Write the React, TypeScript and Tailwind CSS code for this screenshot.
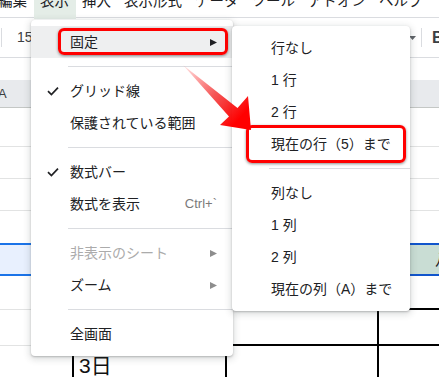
import React from 'react';

const menuBar = ['編集', '表示', '挿入', '表示形式', 'データ', 'ツール', 'アドオン', 'ヘルプ'];

function Arrow({ gray }: { gray?: boolean }) {
    return (
        <svg width="7" height="7" viewBox="0 0 7 7" className="shrink-0">
            <polygon points="0,0 7,3.5 0,7" fill={gray ? '#8d8d8d' : '#202124'} />
        </svg>
    );
}

function Check() {
    return (
        <svg width="12" height="10" viewBox="0 0 12 10" className="absolute left-[16px]">
            <path d="M1 5.2 L4.4 8.6 L11 1.6" fill="none" stroke="#202124" strokeWidth="1.7" />
        </svg>
    );
}

function Item({
    label,
    checked,
    sub,
    disabled,
    hint,
    active,
}: {
    label: string;
    checked?: boolean;
    sub?: boolean;
    disabled?: boolean;
    hint?: string;
    active?: boolean;
}) {
    return (
        <div
            className={`relative flex h-[32px] items-center justify-between pl-[39px] pr-[16px] text-[14px] ${
                disabled ? 'text-[#ababab]' : 'text-[#202124]'
            } ${active ? 'bg-[#eeeff0]' : ''}`}
        >
            {checked && <Check />}
            <span className="whitespace-nowrap">{label}</span>
            {sub && <Arrow gray={disabled || !active} />}
            {hint && <span className="text-[13px] text-[#7a7a7a]">{hint}</span>}
        </div>
    );
}

function Sep() {
    return (
        <div className="flex h-[17px] items-center pl-[37px]">
            <div className="h-px w-full bg-[#dadce0]" />
        </div>
    );
}

function RedBox({ className }: { className: string }) {
    return (
        <div
            className={`pointer-events-none absolute rounded-[6px] border-[3px] border-[#ff0000] shadow-[0_1px_3px_rgba(0,0,0,0.45)] ${className}`}
        />
    );
}

export default function App() {
    return (
        <div className="relative h-[377px] w-[439px] overflow-hidden bg-white font-['Liberation_Sans','Noto_Sans_CJK_JP',sans-serif] text-[#202124]">
            {/* menu bar */}
            <div className="flex h-[18px] items-start border-b border-[#dadce0] pl-0 -ml-[8.5px]">
                {menuBar.map((m) => (
                    <div
                        key={m}
                        className={`h-[19px] px-[6.5px] ${m === '表示' ? 'bg-[#e4ede7]' : ''}`}
                    >
                        <span className="-mt-[6px] block whitespace-nowrap text-[14.5px] leading-[15px] text-[#202124]">
                            {m}
                        </span>
                    </div>
                ))}
            </div>

            {/* toolbar */}
            <div className="flex h-[40px] items-center border-b border-[#dadce0]">
                <div className="ml-[1px] h-[19px] w-px bg-[#dadce0]" />
                <span className="ml-[15px] text-[14px] text-[#3c4043]">150%</span>
                <div className="flex-1" />
                <svg width="7" height="4" viewBox="0 0 7 4">
                    <polygon points="0,0 7,0 3.5,4" fill="#5f6368" />
                </svg>
                <div className="ml-[5px] h-[19px] w-px bg-[#dadce0]" />
                <span className="ml-[10px] w-[7px] whitespace-nowrap text-[16px] font-bold text-[#3c4043]">B</span>
            </div>

            {/* formula bar */}
            <div className="h-[22px]" />

            {/* column header */}
            <div className="flex h-[28px] items-center border-b border-[#c4c7c5] bg-[#e8eaed]">
                <span className="-ml-[2px] text-[13px] text-[#3c4043]">A</span>
            </div>

            {/* rows */}
            <div className="h-[39px] border-b border-[#e2e3e3]" />
            <div className="h-[32px] border-b border-[#e2e3e3]" />
            <div className="h-[32px] border-b border-[#e2e3e3]" />
            <div className="h-[32px]" />
            <div className="flex h-[33px]">
                <div className="w-[300px] border-y-2 border-[#1a73e8] bg-[#e8f0fe]" />
                <div className="flex flex-1 items-center overflow-hidden border-y-2 border-[#1155cc] bg-[#c9ddd4] pl-[135px]">
                    <span className="whitespace-nowrap text-[16px] text-[#202124]">八</span>
                </div>
            </div>
            <div className="flex h-[34px]">
                <div className="w-[73px] border-b border-[#e2e3e3]" />
                <div className="flex-1 border-b-2 border-black" />
            </div>
            <div className="flex h-[36px]">
                <div className="w-[73px] border-b border-[#e2e3e3]" />
                <div className="w-[304px] border-b-2 border-black" />
                <div className="flex-1 border-b-2 border-l-2 border-black" />
            </div>
            <div className="flex h-[40px]">
                <div className="w-[74px] border-r-2 border-black" />
                <div className="w-[153px] border-r-2 border-black pl-[5px] pt-[9px] text-[21px] leading-none text-[#111]">
                    3日
                </div>
                <div className="w-[152px] border-r-2 border-black" />
                <div className="flex-1" />
            </div>

            {/* main menu */}
            <div className="absolute left-[31px] top-[20px] w-[202px] rounded-[4px] bg-white py-[6px] shadow-[0_2px_6px_2px_rgba(60,64,67,0.15),0_1px_2px_rgba(60,64,67,0.3)]">
                <Item label="固定" sub active />
                <Sep />
                <Item label="グリッド線" checked />
                <Item label="保護されている範囲" />
                <Sep />
                <Item label="数式バー" checked />
                <Item label="数式を表示" hint="Ctrl+`" />
                <Sep />
                <Item label="非表示のシート" sub disabled />
                <Item label="ズーム" sub />
                <Sep />
                <Item label="全画面" />
                <RedBox className="left-[27px] top-[8px] h-[27px] w-[170px]" />
            </div>

            {/* submenu */}
            <div className="absolute left-[232px] top-[26px] w-[178px] rounded-[4px] bg-white py-[6px] shadow-[0_2px_6px_2px_rgba(60,64,67,0.15),0_1px_2px_rgba(60,64,67,0.3)]">
                <Item label="行なし" />
                <Item label="1 行" />
                <Item label="2 行" />
                <Item label="現在の行（5）まで" />
                <Sep />
                <Item label="列なし" />
                <Item label="1 列" />
                <Item label="2 列" />
                <Item label="現在の列（A）まで" />
                <RedBox className="left-[14px] top-[99px] h-[38px] w-[160px]" />
            </div>

            {/* red arrow */}
            <svg className="pointer-events-none absolute left-0 top-0" width="439" height="377" viewBox="0 0 439 377">
                <defs>
                    <linearGradient id="arr" gradientUnits="userSpaceOnUse" x1="183" y1="65" x2="240" y2="118">
                        <stop offset="0" stopColor="#ff0000" stopOpacity="0.08" />
                        <stop offset="0.55" stopColor="#f01010" stopOpacity="0.7" />
                        <stop offset="1" stopColor="#ff0000" stopOpacity="1" />
                    </linearGradient>
                </defs>
                <polygon
                    points="183,65 237.5,108 248,96 251,130 220,125 229,116.5"
                    fill="url(#arr)"
                />
            </svg>
        </div>
    );
}
